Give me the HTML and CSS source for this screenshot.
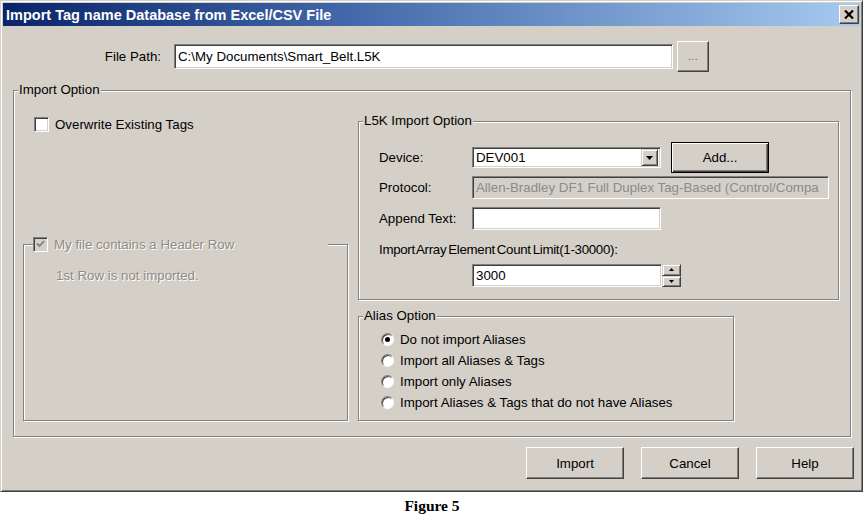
FILE: index.html
```html
<!DOCTYPE html>
<html>
<head>
<meta charset="utf-8">
<title>Import Tag name Database from Excel/CSV File</title>
<link rel="stylesheet" href="styles.css">
</head>
<body>
<div class="window">
  <div class="titlebar">
    <span class="title">Import Tag name Database from Excel/CSV File</span>
    <span class="close-btn">
      <svg width="10" height="9" viewBox="0 0 10 9"><path d="M1 0.5 L9 8.5 M9 0.5 L1 8.5" stroke="#000" stroke-width="2.2" fill="none"/></svg>
    </span>
  </div>
  <div class="content">
    <div class="path-row">
      <span class="path-label">File Path:</span>
      <div class="field path-field">C:\My Documents\Smart_Belt.L5K</div>
      <div class="btn browse-btn"><span class="dots">...</span></div>
    </div>

    <fieldset class="group import-group">
      <legend class="group-legend">Import Option</legend>
      <div class="import-body">
        <div class="col-left">
          <div class="check-row overwrite-row">
            <span class="checkbox"></span>
            <span>Overwrite Existing Tags</span>
          </div>
          <fieldset class="group header-group">
            <legend class="header-legend">
              <span class="legend-check">
                <span class="checkbox checkbox-disabled">
                  <svg width="9" height="8" viewBox="0 0 9 8"><path d="M1 3.5 L3.5 6 L8 1.2" stroke="#808080" stroke-width="1.8" fill="none"/></svg>
                </span>
                <span class="disabled-text">My file contains a Header Row</span>
              </span>
            </legend>
            <p class="note disabled-text">1st Row is not imported.</p>
          </fieldset>
        </div>

        <div class="col-right">
          <fieldset class="group l5k-group">
            <legend class="group-legend">L5K Import Option</legend>
            <div class="l5k-body">
              <div class="form-row device-row">
                <span class="form-label">Device:</span>
                <div class="field combo">
                  <span class="combo-text">DEV001</span>
                  <span class="combo-arrow">
                    <svg width="7" height="4" viewBox="0 0 7 4"><path d="M0 0 H7 L3.5 4 Z" fill="#000"/></svg>
                  </span>
                </div>
                <div class="btn default-btn add-btn">Add...</div>
              </div>
              <div class="form-row protocol-row">
                <span class="form-label">Protocol:</span>
                <div class="field field-disabled protocol-field">Allen-Bradley DF1 Full Duplex Tag-Based (Control/Compa</div>
              </div>
              <div class="form-row append-row">
                <span class="form-label">Append Text:</span>
                <div class="field append-field"></div>
              </div>
              <div class="limit-label">Import Array Element Count Limit(1-30000):</div>
              <div class="spin-row">
                <div class="field spin-field">3000</div>
                <div class="spin">
                  <span class="spin-btn"><svg width="5" height="3" viewBox="0 0 5 3"><path d="M0 3 H5 L2.5 0 Z" fill="#000"/></svg></span>
                  <span class="spin-btn"><svg width="5" height="3" viewBox="0 0 5 3"><path d="M0 0 H5 L2.5 3 Z" fill="#000"/></svg></span>
                </div>
              </div>
            </div>
          </fieldset>

          <fieldset class="group alias-group">
            <legend class="group-legend">Alias Option</legend>
            <div class="radio-list">
              <div class="radio-row"><span class="radio checked"></span><span>Do not import Aliases</span></div>
              <div class="radio-row"><span class="radio"></span><span>Import all Aliases &amp; Tags</span></div>
              <div class="radio-row"><span class="radio"></span><span>Import only Aliases</span></div>
              <div class="radio-row"><span class="radio"></span><span>Import Aliases &amp; Tags that do not have Aliases</span></div>
            </div>
          </fieldset>
        </div>
      </div>
    </fieldset>

    <div class="button-row">
      <div class="btn action-btn">Import</div>
      <div class="btn action-btn">Cancel</div>
      <div class="btn action-btn">Help</div>
    </div>
  </div>
</div>
<div class="caption">Figure 5</div>
</body>
</html>
```

FILE: styles.css
```css
* { box-sizing: border-box; }

body {
  margin: 0;
  width: 864px;
  height: 520px;
  background: #fff;
  font-family: "Liberation Sans", Arial, sans-serif;
  font-size: 13.3px;
  color: #000;
  overflow: hidden;
}

.window {
  width: 863px;
  height: 492px;
  background: #d4d0c8;
  border: 1px solid;
  border-color: #d4d0c8 #404040 #404040 #d4d0c8;
  box-shadow: inset 1px 1px 0 #fff, inset -1px -1px 0 #808080;
  padding: 2px;
  display: flex;
  flex-direction: column;
}

.titlebar {
  height: 23px;
  flex: none;
  background: linear-gradient(to right, #0a246a 0%, #4a70b0 45%, #a6caf0 100%);
  display: flex;
  align-items: center;
  justify-content: space-between;
  padding: 0 1px 0 3px;
}

.title {
  color: #fff;
  font-weight: bold;
  font-size: 14.5px;
  white-space: nowrap;
}

.close-btn {
  width: 20px;
  height: 19px;
  background: #d4d0c8;
  border: 1px solid;
  border-color: #fff #404040 #404040 #fff;
  box-shadow: inset -1px -1px 0 #808080;
  display: flex;
  align-items: center;
  justify-content: center;
}

.content {
  flex: 1;
  display: flex;
  flex-direction: column;
  padding-top: 15px;
}

/* generic controls */
.field {
  background: #fff;
  border: 1px solid;
  border-color: #808080 #fff #fff #808080;
  box-shadow: inset 1px 1px 0 #404040, inset -1px -1px 0 #d4d0c8;
  padding: 0 3px;
  display: flex;
  align-items: center;
  white-space: nowrap;
  overflow: hidden;
}

.field-disabled {
  background: #d4d0c8;
  color: #8d8b85;
}

.btn {
  background: #d4d0c8;
  border: 1px solid;
  border-color: #fff #404040 #404040 #fff;
  box-shadow: inset -1px -1px 0 #808080;
  display: flex;
  align-items: center;
  justify-content: center;
}

.default-btn {
  border: 1px solid #000;
  box-shadow: inset 1px 1px 0 #fff, inset -1px -1px 0 #404040, inset -2px -2px 0 #808080;
}

.group {
  margin: 0;
  padding: 0;
  min-width: 0;
  border: 1px solid #808080;
  box-shadow: 1px 1px 0 #fff, inset 1px 1px 0 #fff;
}

.group-legend {
  margin-left: 4px;
  padding: 0 1px;
  line-height: 16px;
  background: #d4d0c8;
}

.checkbox {
  width: 15px;
  height: 15px;
  flex: none;
  background: #fff;
  border: 1px solid;
  border-color: #808080 #fff #fff #808080;
  box-shadow: inset 1px 1px 0 #404040, inset -1px -1px 0 #d4d0c8;
  display: flex;
  align-items: center;
  justify-content: center;
}

.checkbox-disabled {
  background: #d4d0c8;
}

.disabled-text {
  color: #8d8b85;
  text-shadow: 1px 1px 0 #fff;
}

/* file path row */
.path-row {
  display: flex;
  align-items: center;
  height: 31px;
}

.path-label {
  width: 158px;
  text-align: right;
}

.path-field {
  margin-left: 13px;
  width: 499px;
  height: 25px;
}

.browse-btn {
  margin-left: 4px;
  width: 32px;
  height: 31px;
  align-items: flex-end;
  padding-bottom: 9px;
}

.dots {
  font-size: 10px;
  color: #555;
  letter-spacing: 0.5px;
}

/* import option */
.import-group {
  margin: 10px 0 0 10px;
  width: 838px;
}

.import-body {
  display: flex;
  height: 338px;
  padding: 0 0 14px 9px;
}

.col-left {
  width: 326px;
  display: flex;
  flex-direction: column;
}

.check-row {
  display: flex;
  align-items: center;
  gap: 6px;
}

.overwrite-row {
  margin-top: 19px;
  padding-left: 11px;
  height: 15px;
}

.header-group {
  margin-top: 104px;
  margin-bottom: 1px;
  width: 325px;
  flex: 1;
}

.header-legend {
  margin-left: 9px;
  padding: 0;
  background: #d4d0c8;
}

.legend-check {
  display: flex;
  align-items: center;
  gap: 6px;
  width: 295px;
  height: 16px;
}

.note {
  margin: 16px 0 0 32px;
  line-height: 16px;
}

.col-right {
  margin-left: 9px;
  width: 482px;
  display: flex;
  flex-direction: column;
}

.l5k-group {
  margin-top: 15px;
  width: 481px;
}

.l5k-body {
  padding: 0 0 12px 20px;
}

.form-row {
  display: flex;
  align-items: center;
}

.form-label {
  width: 93px;
  flex: none;
}

.device-row {
  margin-top: 13px;
  height: 31px;
}

.combo {
  width: 189px;
  height: 21px;
  padding-right: 2px;
  justify-content: space-between;
}

.combo-arrow {
  width: 17px;
  height: 17px;
  background: #d4d0c8;
  border: 1px solid;
  border-color: #d4d0c8 #404040 #404040 #d4d0c8;
  box-shadow: inset 1px 1px 0 #fff, inset -1px -1px 0 #808080;
  display: flex;
  align-items: center;
  justify-content: center;
}

.add-btn {
  margin-left: 10px;
  width: 98px;
  height: 31px;
}

.protocol-row {
  margin-top: 3px;
  height: 23px;
}

.protocol-field {
  width: 357px;
  height: 23px;
}

.append-row {
  margin-top: 8px;
  height: 23px;
}

.append-field {
  width: 189px;
  height: 23px;
}

.limit-label {
  margin-top: 12px;
  line-height: 16px;
  word-spacing: -1.5px;
  letter-spacing: -0.3px;
}

.spin-row {
  margin-top: 6px;
  margin-left: 93px;
  display: flex;
  height: 23px;
}

.spin-field {
  width: 190px;
  height: 23px;
}

.spin {
  width: 19px;
  height: 23px;
  display: flex;
  flex-direction: column;
}

.spin-btn {
  flex: 1;
  background: #d4d0c8;
  border: 1px solid;
  border-color: #d4d0c8 #404040 #404040 #d4d0c8;
  box-shadow: inset 1px 1px 0 #fff, inset -1px -1px 0 #808080;
  display: flex;
  align-items: center;
  justify-content: center;
}

.alias-group {
  margin-top: 8px;
  margin-bottom: 1px;
  width: 376px;
  flex: 1;
}

.radio-list {
  padding: 5px 0 0 22px;
  display: flex;
  flex-direction: column;
}

.radio-row {
  height: 21px;
  display: flex;
  align-items: center;
  gap: 6px;
}

.radio {
  width: 13px;
  height: 13px;
  flex: none;
  border-radius: 50%;
  background: #fff;
  border: 1px solid;
  border-color: #808080 #fff #fff #808080;
  box-shadow: inset 1px 1px 0 #404040;
  display: flex;
  align-items: center;
  justify-content: center;
}

.radio.checked::after {
  content: "";
  width: 5px;
  height: 5px;
  border-radius: 50%;
  background: #000;
}

/* bottom buttons */
.button-row {
  margin-top: 10px;
  padding-right: 6px;
  display: flex;
  justify-content: flex-end;
  gap: 17px;
}

.action-btn {
  width: 98px;
  height: 32px;
}

.caption {
  margin-top: 5px;
  text-align: center;
  font-family: "Liberation Serif", "Times New Roman", serif;
  font-weight: bold;
  font-size: 15.5px;
  line-height: 18px;
}
```
